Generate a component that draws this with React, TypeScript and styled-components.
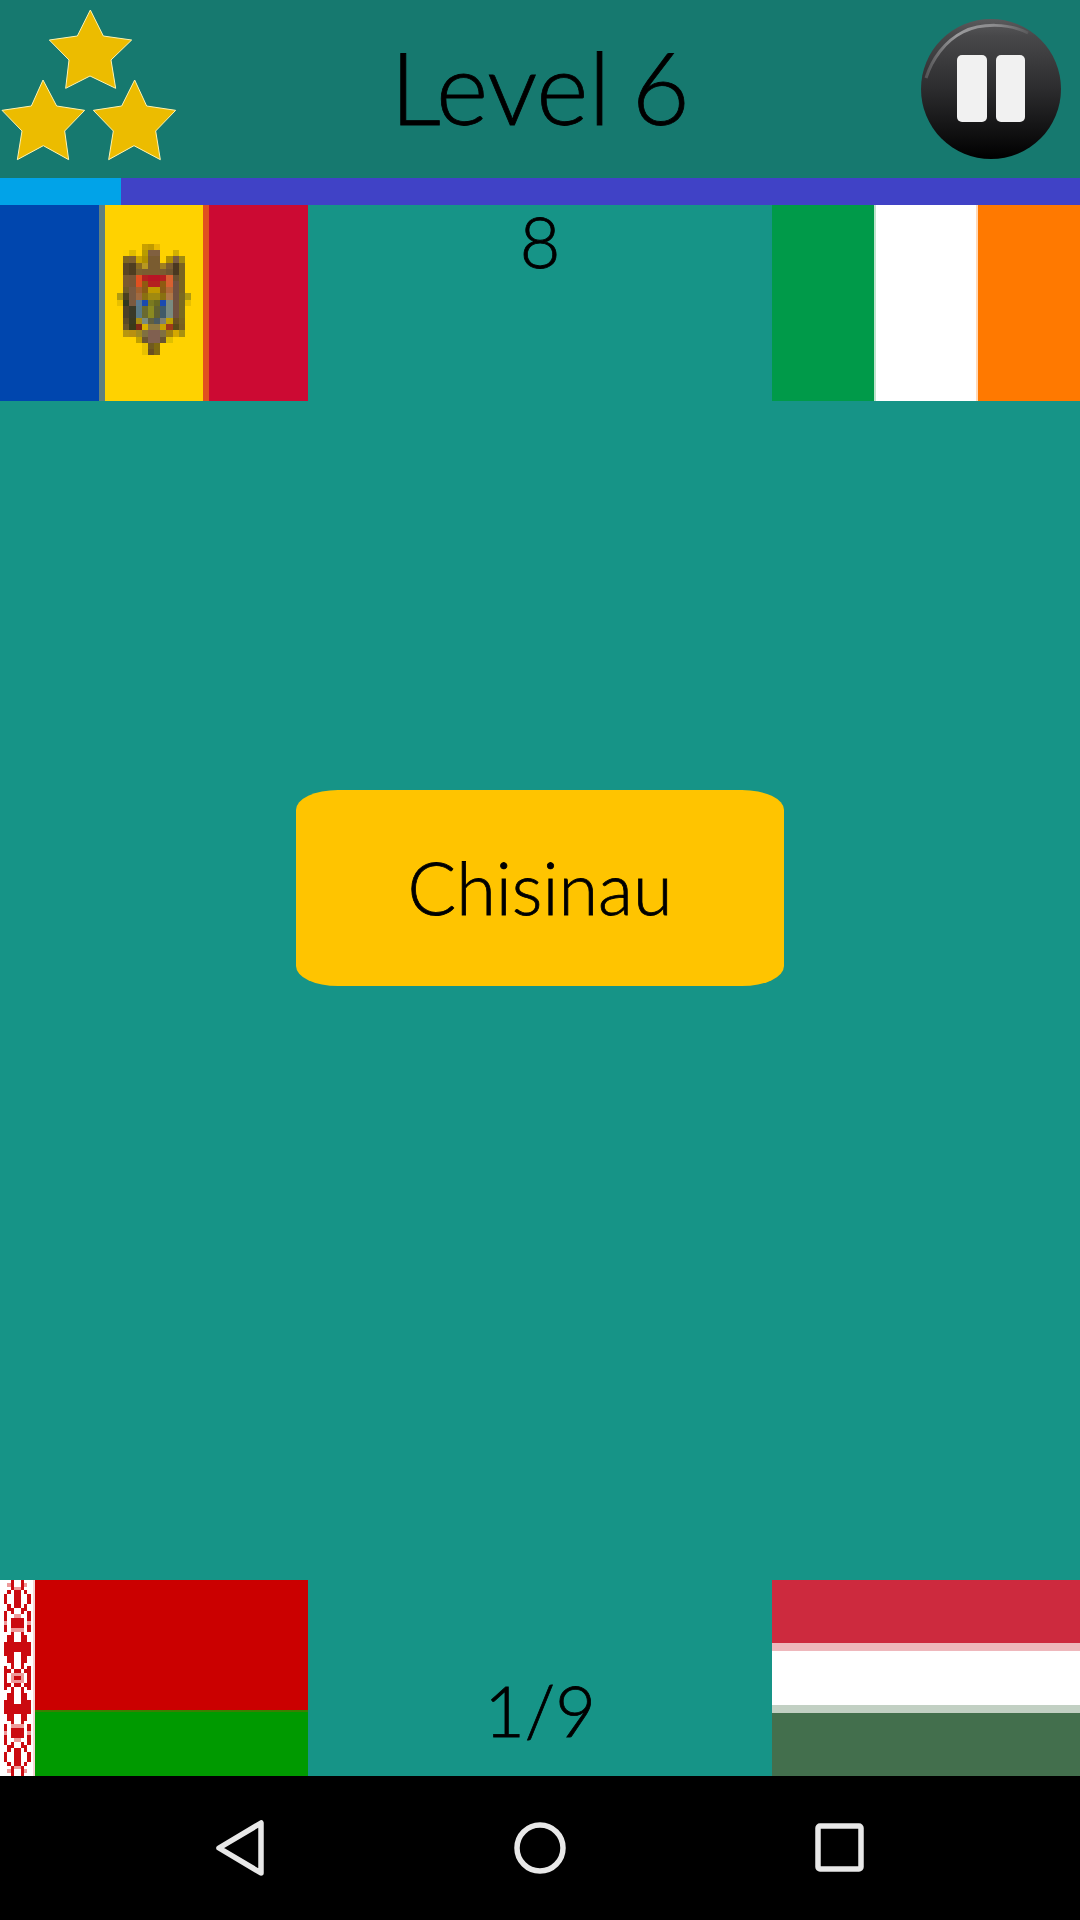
import React from "react";
import styled, { createGlobalStyle } from "styled-components";

const Global = createGlobalStyle`
  html, body { margin: 0; padding: 0; background: #000; }
  #root { width: 1080px; height: 1920px; }
`;

const Screen = styled.div`
  width: 1080px;
  height: 1920px;
  display: flex;
  flex-direction: column;
  background: #169487;
  font-family: Lato, "Open Sans", sans-serif;
  font-weight: 300;
  -webkit-text-stroke: 0.8px #000;
  color: #000;
  overflow: hidden;
`;

const Header = styled.header`
  height: 178px;
  flex: none;
  display: grid;
  grid-template-columns: 1fr auto 1fr;
  align-items: center;
  background: #16796f;
`;

const Stars = styled.svg`
  display: block;
  width: 180px;
  height: 178px;
`;

const Title = styled.h1`
  margin: 0 0 7px 0;
  font-size: 100px;
  line-height: 110px;
  font-weight: 300;
  word-spacing: -6px;
  white-space: nowrap;
`;

const PauseIcon = styled.svg`
  display: block;
  justify-self: end;
  margin: 0 19px 0 0;
  width: 140px;
  height: 140px;
`;

const Progress = styled.div`
  height: 27px;
  flex: none;
  background: #4042c6;
`;

const ProgressFill = styled.div`
  height: 100%;
  width: 121px;
  background: #01a3e8;
`;

const FlagRow = styled.section<{ $end?: boolean }>`
  height: 196px;
  flex: none;
  display: grid;
  grid-template-columns: 308px 1fr 308px;
  align-items: ${(p) => (p.$end ? "end" : "start")};
`;

const Flag = styled.div<{ $column?: boolean }>`
  height: 196px;
  display: flex;
  flex-direction: ${(p) => (p.$column ? "column" : "row")};
`;

const Stripe = styled.div<{ $size: number; $color: string }>`
  flex: 0 0 ${(p) => p.$size}px;
  background: ${(p) => p.$color};
`;

const EmblemStripe = styled(Stripe)`
  display: flex;
  align-items: flex-start;
  justify-content: center;
  padding-top: 39px;
`;

const Emblem = styled.svg`
  display: block;
  width: 74px;
  height: 111px;
`;

const Ornament = styled.svg`
  display: block;
  flex: none;
  width: 33px;
  height: 196px;
  background: #fff;
`;

const FlagBody = styled.div`
  flex: 1;
  display: flex;
  flex-direction: column;
`;

const Counter = styled.div<{ $bottom?: boolean }>`
  text-align: center;
  font-size: 70px;
  line-height: 84px;
  margin: ${(p) => (p.$bottom ? "0 0 24px" : "-6px 0 0")};
`;

const Middle = styled.main`
  flex: 1;
  display: flex;
  justify-content: center;
  align-items: flex-start;
  padding-top: 389px;
`;

const Answer = styled.button`
  width: 488px;
  height: 196px;
  border: 0;
  padding: 0 0 2px;
  background: #ffc400;
  border-radius: 42px / 20px;
  font: inherit;
  font-size: 72px;
  color: #000;
`;

const Nav = styled.nav`
  height: 144px;
  flex: none;
  display: flex;
  align-items: center;
  gap: 240px;
  padding-left: 210px;
  background: #000;
`;

const NavIcon = styled.svg`
  display: block;
  width: 60px;
  height: 60px;
  fill: none;
  stroke: #e8e8e8;
  stroke-width: 5.5;
  stroke-linejoin: round;
`;

const star = (pts: number[][]) => pts.map((p) => `${p[0] / 3},${p[1] / 3}`).join(" ");

const STARS = [
  [[271,30],[310,108],[395,120],[333,180],[347,265],[270,228],[197,265],[207,180],[148,120],[232,108]],
  [[129,240],[170,318],[254,331],[194,393],[206,479],[130,437],[52,479],[66,393],[6,331],[94,318]],
  [[404,240],[440,318],[527,331],[467,393],[481,479],[402,437],[326,479],[340,393],[280,331],[365,318]],
];

const _ = "";
const EMBLEM: string[][] = [
  [_,_,_,_,"#c8a000","#c09a00","#e8b800",_,_,_,_,_],
  [_,"#fbd000","#e0bc00",_,"#b89c00","#806040","#806040",_,_,"#d4b000",_,_],
  [_,"#7d6420","#7d5f30","#c9a400","#b09000","#7a5c30","#7a5c30",_,"#b09000","#7a5c40","#a08a10",_],
  [_,"#5a4525","#4f3d20","#8a6a20","#b89820","#7a5c30","#7a5c30","#a08020","#7a5c30","#4a3820","#7a6420",_],
  [_,"#5a4525","#4f3d20","#7a6030","#7a5c30","#7a5c30","#7a5c30","#7a5c30","#6e5530","#4a3820","#7a6420",_],
  [_,"#7a5a30","#7a5535","#e05020","#b42020","#b81425","#b81425","#b42020","#d86030","#6a5030","#7a6420",_],
  [_,"#7a5a30","#7a5535","#e05020","#905a10","#b42020","#b42020","#905a10","#d86030","#705040","#7a6420",_],
  [_,"#6e5a2a","#7a5a40","#a06030","#8a5a15","#c09a00","#c09a00","#8a5a15","#b06838","#705040","#7a6420",_],
  ["#b09a10","#4a4020","#7a5a40","#a06a40","#8a7010","#a08a10","#a08a10","#8a7010","#b07848","#705040","#7a6a20","#b09a10"],
  ["#e8c000","#2f3820","#7a5a40","#5a7a90","#1a4ab0","#7a7a20","#6a6a20","#1a4ab0","#7a8a80","#705040","#7a6a20","#e8c000"],
  [_,"#4a4028","#3a3a28","#5a7a85","#6a6a30","#8a8a20","#606030","#405a68","#7a8a80","#705040","#7a6a20",_],
  [_,"#4a4028","#3a3a28","#5a7a85","#6a6a30","#8a8a20","#606030","#405a68","#7a8a80","#705040","#7a6a20",_],
  [_,"#5a4a28","#3a3a20","#a88c10","#7a8a80","#606040","#4a5a60","#808070","#c0a000","#6a5020","#7a6420",_],
  [_,"#6a5528","#3a3a18","#802a15","#d8b000","#907a40","#907a40","#c8a000","#a03a18","#5a4a18","#7a6020",_],
  [_,"#b89610","#b89010","#a08a20","#807040","#806050","#806050","#807040","#a08010","#d4a800","#a89010",_],
  [_,_,_,"#c0a000","#6a5530","#806050","#806050","#6a5530","#e0c000",_,_,_],
  [_,_,_,_,"#e8c000","#705a20","#806a10",_,_,_,_,_],
  [_,_,_,_,"#e8c000","#6a5020","#806a10",_,_,_,_,_],
];

const HALF = [
  "..r.",".pr.","..rp",".r.r","r..r","r..r","r..r",".r.r",".rr.","r.r.",
  "r..p","r.rr","p.rr","r.rr","r.pp","..r.",".rr.",".rr.","rrrr","rrrr",
  "rrrr","rrr.",".rr.",".rr.","..r.","r.r.","rr.r","r.pp","r.pr",
];
const ROWS = [...HALF, ...HALF.slice(0, -1).reverse()];
const CELL_H = 196 / ROWS.length;
const ORNAMENT_COLOR: Record<string, string> = { r: "#cb0a10", p: "#ee9a9a" };

export default function App() {
  return (
    <Screen>
      <Global />
      <Header>
        <Stars viewBox="0 0 180 178" aria-hidden>
          {STARS.map((s, i) => (
            <polygon key={i} points={star(s)} fill="#ecbc00" stroke="#fff3b0" strokeWidth="1" />
          ))}
        </Stars>
        <Title>Level 6</Title>
        <PauseIcon viewBox="0 0 140 140" aria-hidden>
          <defs>
            <linearGradient id="ball" x1="0" y1="0" x2="0" y2="1">
              <stop offset="0" stopColor="#5a5a5c" />
              <stop offset="0.12" stopColor="#48484a" />
              <stop offset="0.5" stopColor="#2c2c2e" />
              <stop offset="1" stopColor="#000" />
            </linearGradient>
            <linearGradient id="shine" x1="0" y1="0" x2="1" y2="0">
              <stop offset="0" stopColor="#555557" />
              <stop offset="0.3" stopColor="#9a9a9c" />
              <stop offset="0.7" stopColor="#8a8a8c" />
              <stop offset="1" stopColor="#5a5a5c" />
            </linearGradient>
          </defs>
          <circle cx="70" cy="70" r="70" fill="url(#ball)" />
          <path d="M5 59 C11 40 24 22 42 13 C60 4 88 4 107 14" fill="none" stroke="url(#shine)" strokeWidth="3" />
          <rect x="36" y="36" width="30" height="67" rx="5" fill="#f1f1f1" />
          <rect x="75" y="36" width="29" height="67" rx="5" fill="#f1f1f1" />
        </PauseIcon>
      </Header>
      <Progress>
        <ProgressFill />
      </Progress>
      <FlagRow>
        <Flag>
          <Stripe $size={99} $color="#0046ae" />
          <Stripe $size={6} $color="#5f7f80" />
          <EmblemStripe $size={98} $color="#ffd200">
            <Emblem viewBox="0 0 12 18" shapeRendering="crispEdges" aria-hidden>
              {EMBLEM.flatMap((row, y) =>
                row.map((c, x) => (c ? <rect key={`${x}-${y}`} x={x} y={y} width="1" height="1" fill={c} /> : null))
              )}
            </Emblem>
          </EmblemStripe>
          <Stripe $size={6} $color="#e0501f" />
          <Stripe $size={99} $color="#cc0a33" />
        </Flag>
        <Counter>8</Counter>
        <Flag>
          <Stripe $size={102} $color="#009a49" />
          <Stripe $size={2} $color="#bfe3cd" />
          <Stripe $size={100} $color="#ffffff" />
          <Stripe $size={2} $color="#ffd9b8" />
          <Stripe $size={102} $color="#ff7900" />
        </Flag>
      </FlagRow>
      <Middle>
        <Answer>Chisinau</Answer>
      </Middle>
      <FlagRow $end>
        <Flag>
          <Ornament viewBox="0 0 33 196" shapeRendering="crispEdges" aria-hidden>
            {ROWS.flatMap((r, y) =>
              [...r, ...[...r].reverse()].map((c, x) =>
                ORNAMENT_COLOR[c] ? (
                  <rect key={`${x}-${y}`} x={4 + x * 3.35} y={y * CELL_H} width="3.35" height={CELL_H} fill={ORNAMENT_COLOR[c]} />
                ) : null
              )
            )}
          </Ornament>
          <Stripe $size={2} $color="#f6d4d4" />
          <FlagBody>
            <Stripe $size={130} $color="#cb0000" />
            <Stripe $size={2} $color="#3a8000" />
            <Stripe $size={64} $color="#009a00" />
          </FlagBody>
        </Flag>
        <Counter $bottom>1/9</Counter>
        <Flag $column>
          <Stripe $size={63} $color="#cd2a3e" />
          <Stripe $size={8} $color="#eeb8bc" />
          <Stripe $size={54} $color="#ffffff" />
          <Stripe $size={8} $color="#c2d0c3" />
          <Stripe $size={63} $color="#436f4d" />
        </Flag>
      </FlagRow>
      <Nav>
        <NavIcon viewBox="0 0 60 60" aria-hidden>
          <path d="M9 30 L51 5 L51 55 Z" />
        </NavIcon>
        <NavIcon viewBox="0 0 60 60" aria-hidden>
          <circle cx="30" cy="30" r="23" />
        </NavIcon>
        <NavIcon viewBox="0 0 60 60" aria-hidden>
          <rect x="8" y="8" width="43" height="43" rx="2" />
        </NavIcon>
      </Nav>
    </Screen>
  );
}
